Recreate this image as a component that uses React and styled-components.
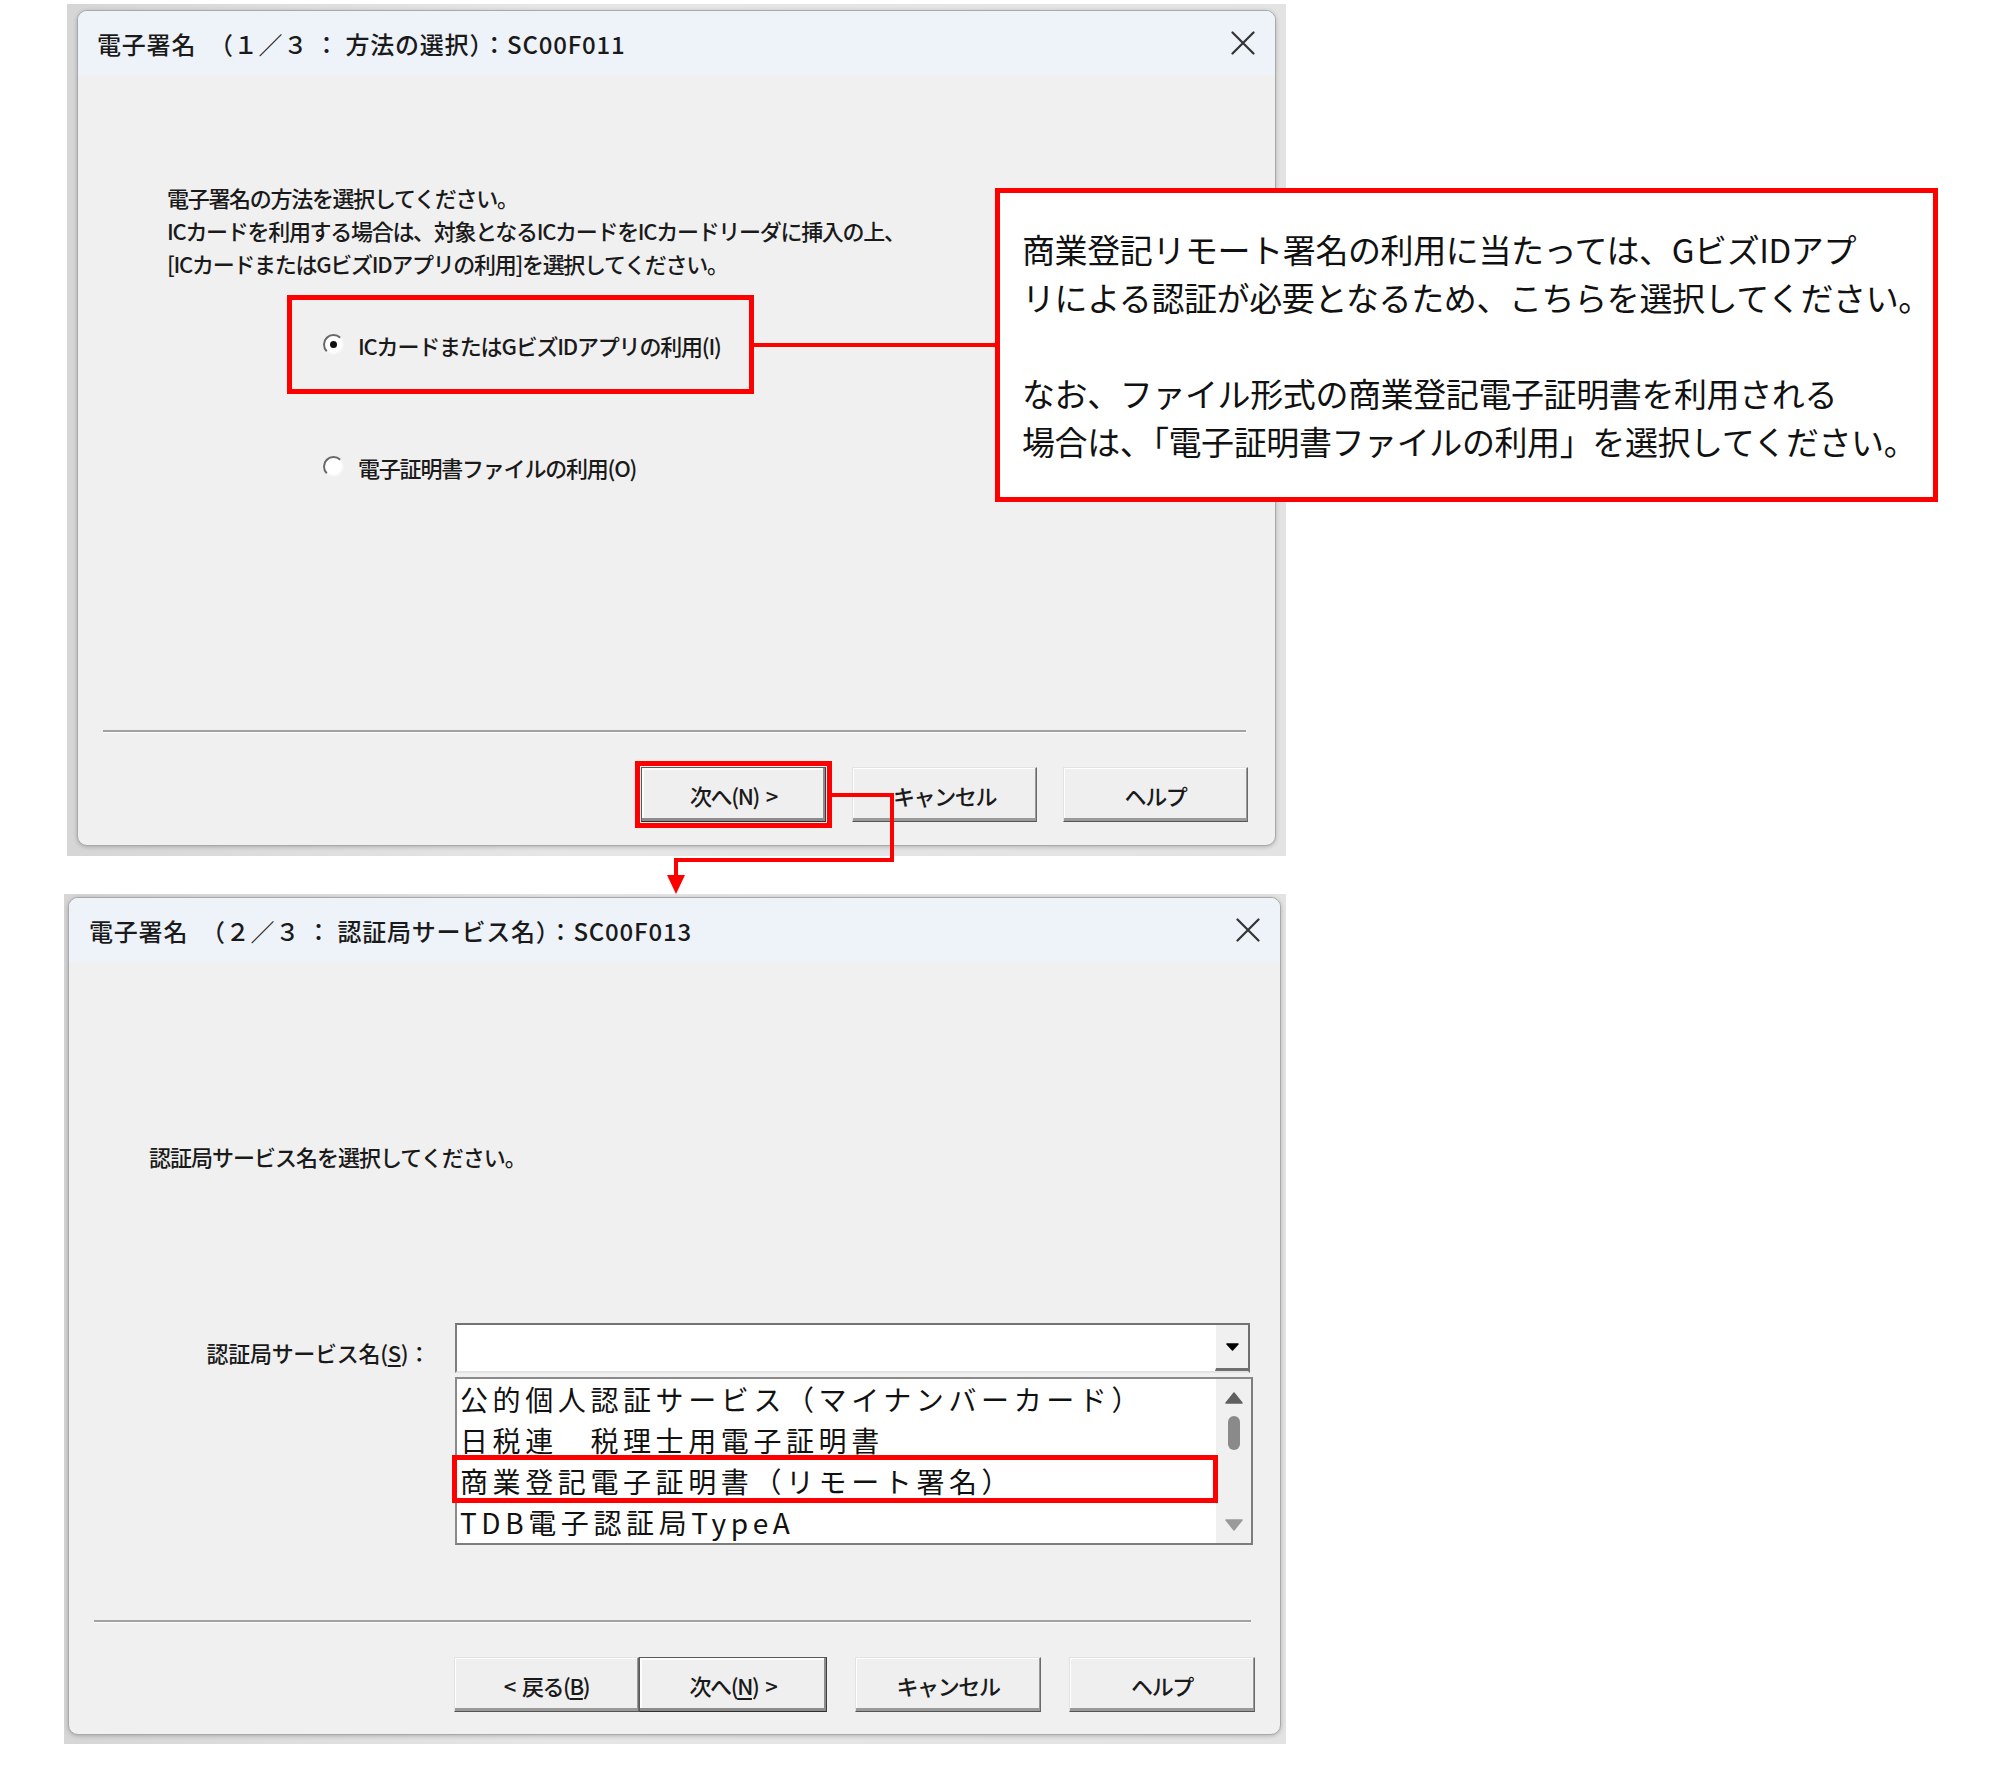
import React from 'react'
import styled, { createGlobalStyle, css } from 'styled-components'

const GlobalStyle = createGlobalStyle`
  html, body {
    margin: 0;
    padding: 0;
    background: #fff;
  }
  body {
    font-family: "Noto Sans CJK JP", "Noto Sans", sans-serif;
  }
`

const Page = styled.div`
  position: relative;
  width: 2000px;
  height: 1776px;
  box-sizing: border-box;
  padding: 4px 0 0 64px;
  display: flex;
  flex-direction: column;
  align-items: flex-start;
  gap: 38px;
`

const Frame = styled.div`
  box-sizing: border-box;
  width: ${p => p.$width}px;
  margin-left: ${p => p.$shift || 0}px;
  padding: ${p => p.$pad};
  background: linear-gradient(90deg, #d6d6d6, #e6e6e6 40%, #e3e3e3);
`

const Window = styled.div`
  box-sizing: border-box;
  height: ${p => p.$height}px;
  display: flex;
  flex-direction: column;
  background: #f0f0f0;
  border: 1px solid #a9a9a9;
  border-radius: 10px;
  overflow: hidden;
  box-shadow: 0 1px 4px rgba(0, 0, 0, 0.22);
  color: #1a1a1a;
  font-weight: 500;
`

const TitleBar = styled.div`
  flex: none;
  height: 64px;
  display: flex;
  align-items: center;
  justify-content: space-between;
  padding: 0 20px 0 ${p => p.$left}px;
  background: #eef2f9;
  font-size: 24px;
  letter-spacing: 0.8px;
  white-space: pre;
`

const Body = styled.div`
  flex: 1;
  display: flex;
  flex-direction: column;
  align-items: flex-start;
  padding: ${p => p.$top}px 0 0 ${p => p.$left}px;
`

const Prompt = styled.p`
  margin: 0;
  font-size: 22px;
  line-height: 33px;
  letter-spacing: ${p => p.$tight || -1.3}px;
`

const RadioList = styled.div`
  display: flex;
  flex-direction: column;
  gap: 33px;
  margin: 20px 0 0 125px;
`

const RadioRow = styled.label`
  box-sizing: border-box;
  width: 457px;
  height: 89px;
  display: flex;
  align-items: center;
  gap: 14px;
  padding-left: 31px;
  font-size: 22px;
  letter-spacing: -1.2px;
  ${p => p.$marked && css`
    outline: 5px solid #ff0000;
  `}
`

const RadioMark = styled.span`
  box-sizing: border-box;
  flex: none;
  width: 21px;
  height: 21px;
  border-radius: 50%;
  border: 2px solid;
  border-color: #686868 #f6f6f6 #f6f6f6 #686868;
  background: #fff;
  display: flex;
  align-items: center;
  justify-content: center;
  &::after {
    content: '';
    display: ${p => (p.$checked ? 'block' : 'none')};
    width: 7px;
    height: 7px;
    border-radius: 50%;
    background: #111;
  }
`

const FormRow = styled.div`
  display: flex;
  gap: 25px;
  margin-top: 150px;
`

const FieldLabel = styled.div`
  width: 281px;
  padding-top: 13px;
  text-align: right;
  font-size: 22px;
  line-height: 33px;
  letter-spacing: -0.3px;
`

const FieldColumn = styled.div`
  width: 798px;
  display: flex;
  flex-direction: column;
  gap: 4px;
`

const Combo = styled.div`
  box-sizing: border-box;
  width: 795px;
  height: 50px;
  display: flex;
  justify-content: flex-end;
  background: #fff;
  border: 2px solid;
  border-color: #737373 #737373 #e4e4e4 #7d7d7d;
`

const DropButton = styled.span`
  box-sizing: border-box;
  width: 35px;
  height: 100%;
  display: flex;
  align-items: center;
  justify-content: center;
  background: #f0f0f0;
  border-right: 2px solid #6f6f6f;
  border-bottom: 3px solid #6f6f6f;
  border-left: 1px solid #fff;
  margin-right: -2px;
`

const ListBox = styled.div`
  box-sizing: border-box;
  width: 798px;
  height: 168px;
  display: flex;
  background: #fff;
  border: 2px solid;
  border-color: #8a8a8a #7d7d7d #7d7d7d #8a8a8a;
`

const Items = styled.ul`
  flex: 1;
  margin: 0;
  padding: 0;
  list-style: none;
`

const Item = styled.li`
  position: relative;
  height: 41px;
  padding-left: 3px;
  font-size: 28px;
  font-weight: 400;
  line-height: 41px;
  letter-spacing: 4.6px;
  white-space: nowrap;
  color: #111;
  ${p => p.$marked && css`
    &::after {
      content: '';
      position: absolute;
      top: -6px;
      bottom: -1px;
      left: -5px;
      right: -2px;
      border: 5px solid #ff0000;
    }
  `}
`

const ScrollTrack = styled.div`
  width: 35px;
  display: flex;
  flex-direction: column;
  align-items: center;
  padding: 13px 0 12px;
  background: #f0f0f0;
`

const Thumb = styled.span`
  width: 12px;
  height: 34px;
  margin: 12px 0 auto;
  border-radius: 6px;
  background: #8a8a8a;
`

const Footer = styled.div`
  flex: none;
  padding-bottom: ${p => p.$bottom}px;
`

const Rule = styled.div`
  margin: 0 29px 0 25px;
  border-top: 2px solid #a2a2a2;
  border-bottom: 1px solid #fbfbfb;
`

const ButtonRow = styled.div`
  display: flex;
  justify-content: flex-end;
  gap: ${p => p.$gap}px;
  margin-top: 34px;
  padding-right: ${p => p.$right}px;
`

const ButtonPair = styled.div`
  display: flex;
`

const Button = styled.button`
  box-sizing: border-box;
  width: ${p => p.$w || 185}px;
  height: 55px;
  padding: 0;
  font-family: inherit;
  font-size: 22px;
  font-weight: 500;
  letter-spacing: -1.4px;
  white-space: pre;
  color: #1a1a1a;
  background: #efefef;
  border: 1px solid;
  border-color: #e2e2e2 #6a6a6a #555 #e2e2e2;
  box-shadow: inset -1px -3px 0 #9a9a9a, inset 1px 1px 0 #fff;
  ${p => p.$default && css`
    border-color: #5a5a5a #3e3e3e #2e2e2e #5a5a5a;
    box-shadow: inset -2px -3px 0 #8c8c8c, inset 2px 2px 0 #fdfdfd;
  `}
  ${p => p.$marked && css`
    outline: 5px solid #ff0000;
    outline-offset: 1px;
  `}
`

const Chevron = styled.span`
  margin: 0 ${p => (p.$before ? 7 : 0)}px 0 ${p => (p.$before ? 0 : 7)}px;
`

const Key = styled.span`
  text-decoration: underline;
  text-underline-offset: 3px;
`

const Callout = styled.div`
  position: absolute;
  left: 995px;
  top: 188px;
  width: 943px;
  height: 314px;
  box-sizing: border-box;
  padding: 32px 0 0 22px;
  border: 5px solid #ff0000;
  background: #fff;
  color: #111;
  font-size: 33px;
  line-height: 48px;
  letter-spacing: -0.4px;
  white-space: nowrap;
  p {
    margin: 0;
  }
  p + p {
    margin-top: 48px;
  }
`

const Arrows = styled.svg`
  position: absolute;
  left: 0;
  top: 0;
  pointer-events: none;
`

function CloseIcon() {
  return (
    <svg width="24" height="24" viewBox="0 0 24 24">
      <path d="M1.5 1.5 L22.5 22.5 M22.5 1.5 L1.5 22.5" stroke="#333" strokeWidth="2.2" strokeLinecap="round" />
    </svg>
  )
}

function Triangle({ down, color, w = 18, h = 12 }) {
  return (
    <svg width={w} height={h} viewBox={`0 0 ${w} ${h}`}>
      <path
        d={down ? `M1 1 H${w - 1} L${w / 2} ${h - 1} Z` : `M1 ${h - 1} H${w - 1} L${w / 2} 1 Z`}
        fill={color}
        stroke={color}
        strokeWidth="1.5"
        strokeLinejoin="round"
      />
    </svg>
  )
}

const services = [
  '公的個人認証サービス（マイナンバーカード）',
  '日税連　税理士用電子証明書',
  '商業登記電子証明書（リモート署名）',
  'TDB電子認証局TypeA',
]

export default function App() {
  return (
    <Page>
      <GlobalStyle />

      <Frame $width={1219} $shift={3} $pad="6px 10px 10px 10px">
        <Window $height={836}>
          <TitleBar $left={19}>
            <span>電子署名　（１／３ ： 方法の選択）：SC00F011</span>
            <CloseIcon />
          </TitleBar>
          <Body $top={106} $left={89}>
            <Prompt>
              電子署名の方法を選択してください。
              <br />
              ICカードを利用する場合は、対象となるICカードをICカードリーダに挿入の上、
              <br />
              [ICカードまたはGビズIDアプリの利用]を選択してください。
            </Prompt>
            <RadioList>
              <RadioRow $marked>
                <RadioMark $checked />
                ICカードまたはGビズIDアプリの利用(I)
              </RadioRow>
              <RadioRow>
                <RadioMark />
                電子証明書ファイルの利用(O)
              </RadioRow>
            </RadioList>
          </Body>
          <Footer $bottom={23}>
            <Rule />
            <ButtonRow $gap={26} $right={27}>
              <Button $default $marked>
                次へ(N)<Chevron>&gt;</Chevron>
              </Button>
              <Button>キャンセル</Button>
              <Button>ヘルプ</Button>
            </ButtonRow>
          </Footer>
        </Window>
      </Frame>

      <Frame $width={1222} $pad="3px 5px 9px 4px">
        <Window $height={838}>
          <TitleBar $left={20}>
            <span>電子署名　（２／３ ： 認証局サービス名）：SC00F013</span>
            <CloseIcon />
          </TitleBar>
          <Body $top={178} $left={80}>
            <Prompt $tight={-1}>認証局サービス名を選択してください。</Prompt>
            <FormRow>
              <FieldLabel>
                認証局サービス名(<Key>S</Key>)：
              </FieldLabel>
              <FieldColumn>
                <Combo>
                  <DropButton>
                    <Triangle down color="#000" w={13} h={8} />
                  </DropButton>
                </Combo>
                <ListBox>
                  <Items>
                    {services.map((name, i) => (
                      <Item key={name} $marked={i === 2}>
                        {name}
                      </Item>
                    ))}
                  </Items>
                  <ScrollTrack>
                    <Triangle color="#606060" />
                    <Thumb />
                    <Triangle down color="#9a9a9a" />
                  </ScrollTrack>
                </ListBox>
              </FieldColumn>
            </FormRow>
          </Body>
          <Footer $bottom={22}>
            <Rule />
            <ButtonRow $gap={28} $right={25}>
              <ButtonPair>
                <Button>
                  <Chevron $before>&lt;</Chevron>戻る(<Key>B</Key>)
                </Button>
                <Button $w={188} $default>
                  次へ(<Key>N</Key>)<Chevron>&gt;</Chevron>
                </Button>
              </ButtonPair>
              <Button $w={186}>キャンセル</Button>
              <Button $w={186}>ヘルプ</Button>
            </ButtonRow>
          </Footer>
        </Window>
      </Frame>

      <Callout>
        <p>
          商業登記リモート署名の利用に当たっては、GビズIDアプ
          <br />
          リによる認証が必要となるため、こちらを選択してください。
        </p>
        <p>
          なお、ファイル形式の商業登記電子証明書を利用される
          <br />
          場合は、「電子証明書ファイルの利用」を選択してください。
        </p>
      </Callout>

      <Arrows width="2000" height="1776" viewBox="0 0 2000 1776">
        <path d="M754 345 H997" stroke="#ff0000" strokeWidth="4" fill="none" />
        <path d="M832 795 H892 V860 H676 V877" stroke="#ff0000" strokeWidth="4" fill="none" />
        <path d="M667 875 H685 L676 894 Z" fill="#ff0000" />
      </Arrows>
    </Page>
  )
}
